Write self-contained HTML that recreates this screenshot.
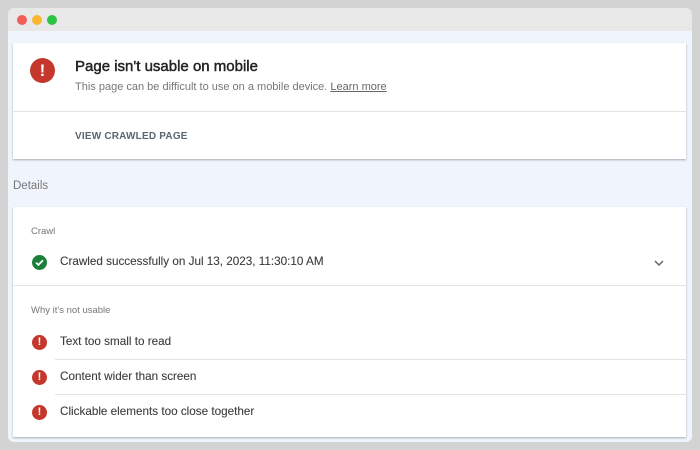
<!DOCTYPE html>
<html><head><meta charset="utf-8"><style>
*{margin:0;padding:0;box-sizing:border-box}
body{width:700px;height:450px;background:#d3d3d3;font-family:"Liberation Sans",Arial,sans-serif;position:relative;overflow:hidden}
.win{position:absolute;left:8px;top:8px;width:684px;height:434px;background:#f0f4fc;border-radius:6px;overflow:hidden}
.tb{height:23px;background:#e8e8e8;position:relative}
.dot{position:absolute;top:7px;width:10px;height:10px;border-radius:50%}
.card{position:absolute;left:5px;width:673px;background:#fff;box-shadow:0 1px 2px rgba(0,0,0,.3)}
.abs{position:absolute;white-space:nowrap}
.ic{position:absolute;border-radius:50%;background:#c5372c;color:#fff;font-weight:bold;text-align:center}
.hr{position:absolute;height:1px;background:#e3e3e3;right:0}
.row{font-size:11.7px;color:#3c3c3c;-webkit-text-stroke:0.1px #3c3c3c}
</style></head><body>
<div class="win">
 <div class="tb">
  <div class="dot" style="left:9px;background:#f25e57"></div>
  <div class="dot" style="left:24px;background:#f8b72f"></div>
  <div class="dot" style="left:39px;background:#2cc441"></div>
 </div>
 <div class="card" style="top:35px;height:116px">
  <div class="ic" style="left:17px;top:15px;width:25px;height:25px;font-size:17px;line-height:25px">!</div>
  <div class="abs" style="left:62px;top:15px;font-size:15px;color:#222;-webkit-text-stroke:0.45px #222">Page isn't usable on mobile</div>
  <div class="abs" style="left:62px;top:38px;font-size:11px;color:#777">This page can be difficult to use on a mobile device. <span style="text-decoration:underline;color:#666">Learn more</span></div>
  <div class="hr" style="left:0;top:68px"></div>
  <div class="abs" style="left:62px;top:88px;font-size:10px;font-weight:bold;letter-spacing:.2px;color:#5a6670">VIEW CRAWLED PAGE</div>
 </div>
 <div class="abs" style="left:5px;top:172px;font-size:11.5px;color:#777">Details</div>
 <div class="card" style="top:199px;height:230px">
  <div class="abs" style="left:18px;top:19px;font-size:9.5px;color:#777">Crawl</div>
  <div class="ic" style="left:19px;top:48px;width:15px;height:15px;background:#188038">
   <svg width="15" height="15" viewBox="0 0 15 15" style="position:absolute;left:0;top:0"><path d="M4 7.6l2.4 2.3 4.6-4.6" fill="none" stroke="#fff" stroke-width="1.8"/></svg></div>
  <div class="abs row" style="left:47px;top:48px">Crawled successfully on Jul 13, 2023, 11:30:10 AM</div>
  <svg class="abs" style="left:640px;top:51px" width="12" height="10" viewBox="0 0 12 10"><path d="M2 3l4 4 4-4" fill="none" stroke="#666" stroke-width="1.5"/></svg>
  <div class="hr" style="left:0;top:78px"></div>
  <div class="abs" style="left:18px;top:98px;font-size:9.5px;color:#777">Why it's not usable</div>
  <div class="ic" style="left:19px;top:128px;width:15px;height:15px;font-size:11px;line-height:15px">!</div>
  <div class="abs row" style="left:47px;top:128px">Text too small to read</div>
  <div class="hr" style="left:42px;top:152px"></div>
  <div class="ic" style="left:19px;top:163px;width:15px;height:15px;font-size:11px;line-height:15px">!</div>
  <div class="abs row" style="left:47px;top:163px">Content wider than screen</div>
  <div class="hr" style="left:42px;top:187px"></div>
  <div class="ic" style="left:19px;top:198px;width:15px;height:15px;font-size:11px;line-height:15px">!</div>
  <div class="abs row" style="left:47px;top:198px">Clickable elements too close together</div>
 </div>
</div>
</body></html>
